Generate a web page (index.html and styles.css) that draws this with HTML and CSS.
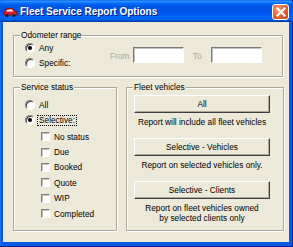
FILE: index.html
```html
<!DOCTYPE html>
<html lang="en">
<head>
  <meta charset="UTF-8">
  <title>Fleet Service Report Options</title>
  <link rel="stylesheet" href="styles.css">
</head>
<body>
  <div class="dialog">
    <div class="titlebar">
      <svg class="app-icon" width="15" height="12" viewBox="0 0 15 12">
        <path d="M1 7 L3 3 L9 2 L12 5 L14 6 L14 9 L1 9 Z" fill="#d8202a" stroke="#7a0a10" stroke-width="0.8"/>
        <path d="M4 4 L8.5 3.2 L10.5 5.4 L3.5 5.6 Z" fill="#f4f4f4"/>
        <circle cx="4" cy="9.5" r="1.6" fill="#222"/>
        <circle cx="11" cy="9.5" r="1.6" fill="#222"/>
      </svg>
      <span class="title">Fleet Service Report Options</span>
      <span class="close-btn">
        <svg width="10" height="10" viewBox="0 0 10 10">
          <path d="M1.5 1.5 L8.5 8.5 M8.5 1.5 L1.5 8.5" stroke="#fff" stroke-width="2" stroke-linecap="square"/>
        </svg>
      </span>
    </div>

    <div class="client">
      <div class="group odometer">
        <span class="group-label">Odometer range</span>
        <div class="odo-row">
          <div class="radio-list">
            <div class="opt"><span class="radio checked"></span>Any</div>
            <div class="opt"><span class="radio"></span>Specific:</div>
          </div>
          <span class="disabled-label from-label">From</span>
          <span class="textbox"></span>
          <span class="disabled-label to-label">To</span>
          <span class="textbox"></span>
        </div>
      </div>

      <div class="lower">
        <div class="group status">
          <span class="group-label">Service status</span>
          <div class="radio-list">
            <div class="opt"><span class="radio"></span>All</div>
            <div class="opt"><span class="radio checked"></span><span class="focus">Selective:</span></div>
          </div>
          <div class="check-list">
            <div class="opt check-opt"><span class="checkbox"></span>No status</div>
            <div class="opt check-opt"><span class="checkbox"></span>Due</div>
            <div class="opt check-opt"><span class="checkbox"></span>Booked</div>
            <div class="opt check-opt"><span class="checkbox"></span>Quote</div>
            <div class="opt check-opt"><span class="checkbox"></span>WIP</div>
            <div class="opt check-opt"><span class="checkbox"></span>Completed</div>
          </div>
        </div>

        <div class="group fleet">
          <span class="group-label">Fleet vehicles</span>
          <div class="fleet-block">
            <button class="btn">All</button>
            <div class="note">Report will include all fleet vehicles</div>
          </div>
          <div class="fleet-block">
            <button class="btn">Selective - Vehicles</button>
            <div class="note">Report on selected vehicles only.</div>
          </div>
          <div class="fleet-block">
            <button class="btn">Selective - Clients</button>
            <div class="note">Report on fleet vehicles owned<br>by selected clients only</div>
          </div>
        </div>
      </div>
    </div>
  </div>
</body>
</html>
```

FILE: styles.css
```css
* {
  box-sizing: border-box;
}

html, body {
  margin: 0;
  width: 293px;
  height: 247px;
  overflow: hidden;
}

body {
  font-family: "Liberation Sans", Arial, sans-serif;
  font-size: 8.3px;
  color: #000;
  background: #0855dd;
}

.dialog {
  width: 293px;
  height: 247px;
  display: flex;
  flex-direction: column;
  background: #0a5ae2;
  box-shadow: inset -1px -1px #00259a, inset 1px 0 #166ef0;
}

/* title bar */
.titlebar {
  height: 22px;
  display: flex;
  align-items: center;
  padding: 0 4px 0 3px;
  background: linear-gradient(to bottom, #0058ee 0%, #3593ff 5%, #288eff 8%, #127dff 11%, #036ffc 14%, #0262ee 20%, #0057e5 27%, #0054e3 35%, #0055eb 56%, #005bf5 68%, #026afe 78%, #0062ef 87%, #0052d6 93%, #0040ab 97%, #003092 100%);
  border-radius: 4px 4px 0 0;
}

.app-icon {
  flex: none;
  margin-top: 1px;
}

.title {
  margin-left: 2px;
  font-size: 10px;
  font-weight: bold;
  color: #fff;
  text-shadow: 1px 1px #0a1883;
  flex: 1;
}

.close-btn {
  width: 17px;
  height: 16px;
  margin-top: 1px;
  display: flex;
  align-items: center;
  justify-content: center;
  border: 1px solid #fff;
  border-radius: 3px;
  background: radial-gradient(circle at 35% 30%, #f0a080 0%, #e4693f 45%, #cc4618 100%);
}

/* client area */
.client {
  flex: 1;
  margin: 0 4px 5px 3px;
  background: #ece9d8;
  padding: 13px 0 0 10px;
}

.group {
  position: relative;
  border: 1px solid #aca899;
  box-shadow: inset 1px 1px #fff, 1px 1px #fff;
}

.group-label {
  position: absolute;
  top: -6px;
  left: 6px;
  padding: 0 1px;
  line-height: 10px;
  background: #ece9d8;
  white-space: nowrap;
}

.odometer {
  width: 270px;
  padding: 5px 0 6px 11px;
}

.odo-row {
  display: flex;
  align-items: center;
}

.radio-list {
  display: flex;
  flex-direction: column;
  gap: 1px;
}

.odometer .radio-list {
  width: 85px;
}

.opt {
  display: flex;
  align-items: center;
  height: 14px;
  line-height: 10px;
  white-space: nowrap;
}

.radio {
  position: relative;
  width: 10px;
  height: 10px;
  margin-right: 4px;
  border-radius: 50%;
  border: 1px solid;
  border-color: #808080 #fff #fff #808080;
  background: #fff;
  box-shadow: inset 1px 1px #404040;
}

.radio.checked::after {
  content: "";
  position: absolute;
  left: 2px;
  top: 2px;
  width: 4px;
  height: 4px;
  border-radius: 50%;
  background: #000;
}

.disabled-label {
  color: #aca899;
}

.from-label {
  width: 23px;
}

.to-label {
  margin-left: 9px;
  width: 18px;
}

.textbox {
  width: 51px;
  height: 16px;
  margin-top: -2px;
  background: #fff;
  border: 1px solid;
  border-color: #7a7a7a #fff #fff #7a7a7a;
  box-shadow: inset 1px 1px #c0c0c0;
}

.lower {
  margin-top: 10px;
  display: grid;
  grid-template-columns: 104px 158px;
  column-gap: 9px;
  height: 144px;
}

.status {
  padding: 10px 0 0 11px;
}

.focus {
  outline: 1px dotted #000;
  line-height: 9px;
  padding: 0 1px;
  margin-left: -1px;
}

.check-list {
  margin-top: 2px;
  padding-left: 16px;
}

.check-opt {
  height: 15.4px;
}

.checkbox {
  width: 9px;
  height: 9px;
  margin-right: 4px;
  background: #fff;
  border: 1px solid;
  border-color: #808080 #fff #fff #808080;
  box-shadow: inset 1px 1px #c8c4b8;
}

.fleet {
  padding: 7px 0 0 7px;
  display: flex;
  flex-direction: column;
  gap: 11px;
}

.fleet-block {
  width: 136px;
  text-align: center;
}

.btn {
  display: block;
  width: 136px;
  height: 18px;
  padding: 0;
  font: inherit;
  color: #000;
  background: #ece9d8;
  border: 1px solid;
  border-color: #fff #404040 #404040 #fff;
  box-shadow: inset -1px -1px #aca899;
}

.note {
  margin-top: 4px;
  line-height: 10px;
}
```
